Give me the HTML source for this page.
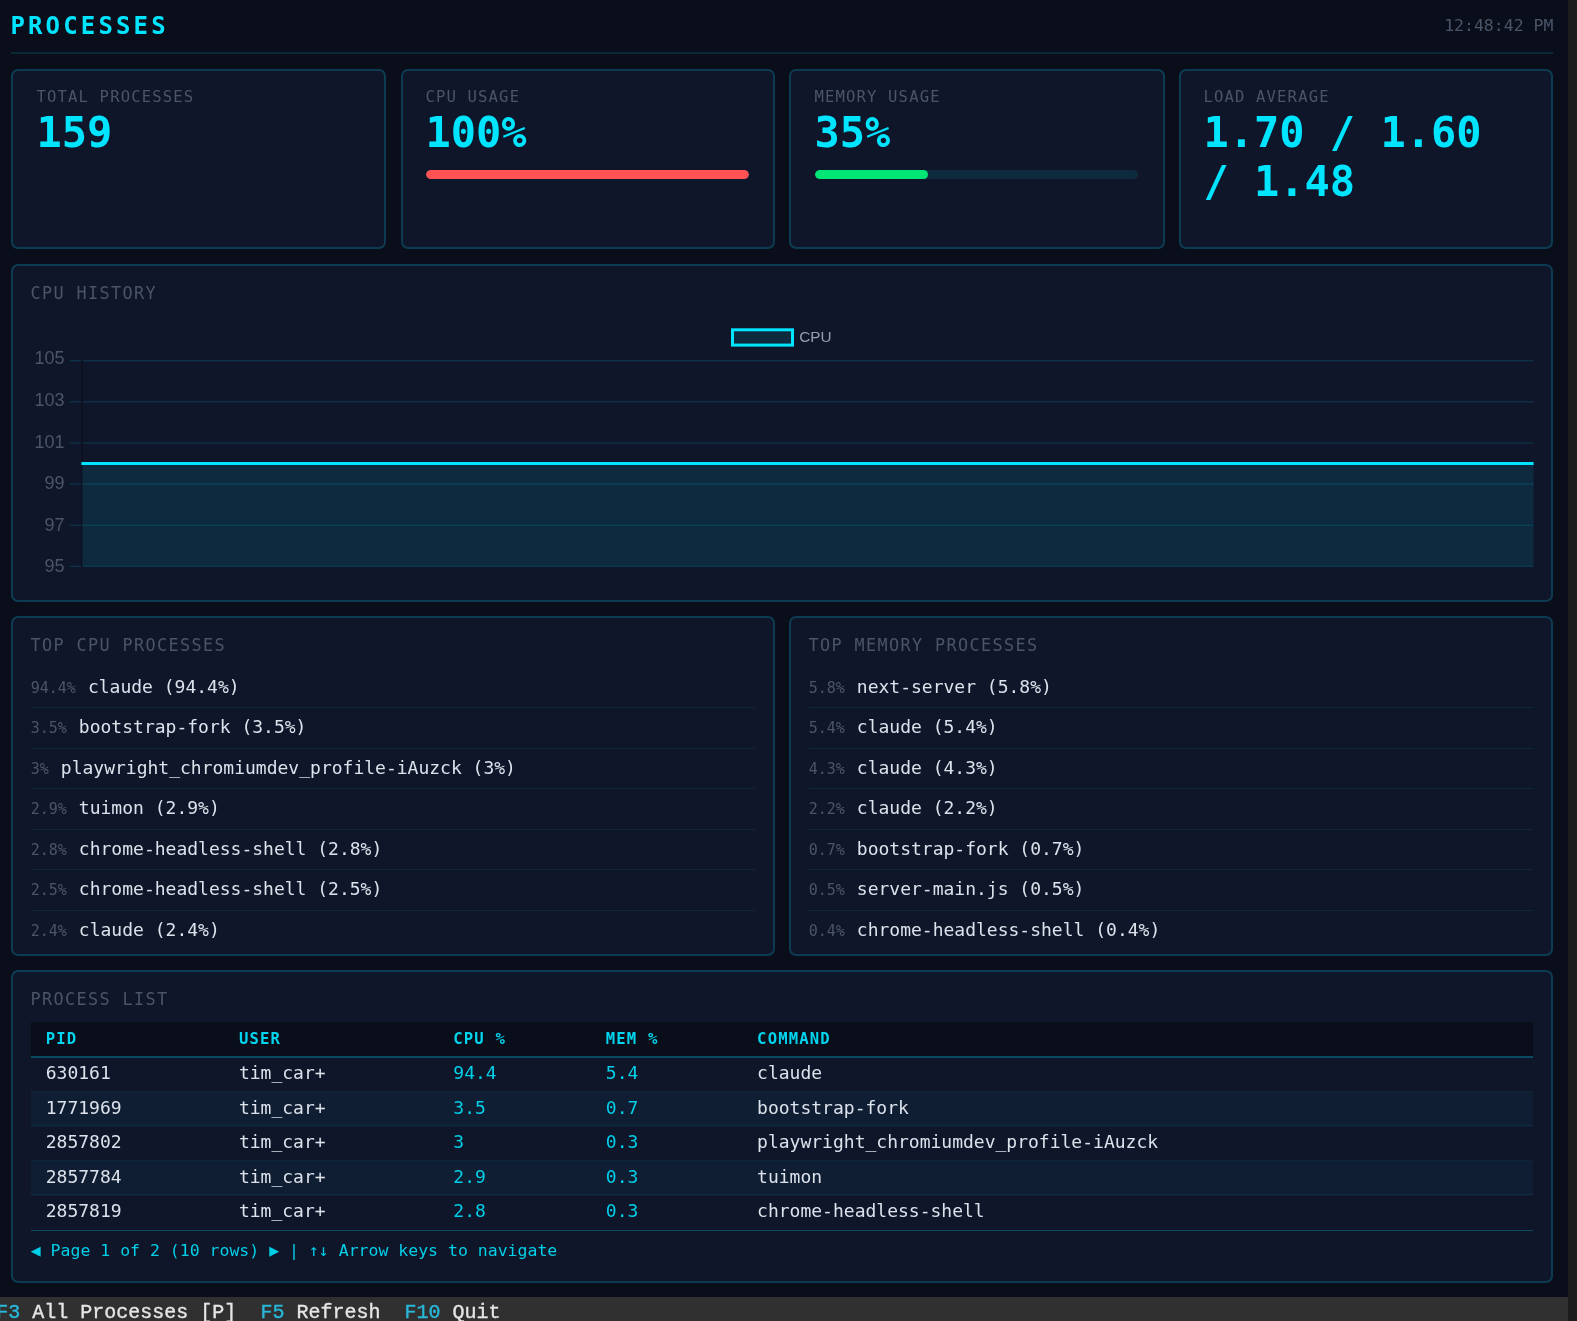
<!DOCTYPE html>
<html lang="en"><head><meta charset="utf-8"><title>Processes</title>
<style>
*{box-sizing:border-box;margin:0;padding:0}
html,body{width:1577px;height:1321px;overflow:hidden;background:#0a0e1a}
body{position:relative;font-family:"DejaVu Sans Mono","Liberation Mono",monospace}
#app{position:absolute;left:0;top:0;width:1577px;height:1321px;will-change:transform}
#app *{position:absolute}
#app .bar>div,#app .k{position:static}
ul{list-style:none}
i{display:block;font-style:normal}
.t{white-space:pre;line-height:normal;font-weight:400;font-family:"DejaVu Sans Mono","Liberation Mono",monospace}
h1.t,h2.t{font-weight:inherit}
.card{background:#10162a;border:2px solid rgba(0,229,255,0.19);border-radius:7px}
.keys{font-family:"Liberation Mono","DejaVu Sans Mono",monospace;font-size:20px;color:#e6e6e6;-webkit-text-stroke:0.35px #e6e6e6}
.k{color:#29b8db;-webkit-text-stroke-color:#29b8db}
</style></head>
<body>
<main id="app">
<header class="hdr" style="left:0.00px;top:0.00px;width:1568.00px;height:56.00px;">
<h1 class="t" style="top:12.00px;font-size:24px;color:#00e5ff;left:10.40px;font-weight:700;letter-spacing:3.15px;">PROCESSES</h1>
<time class="t" style="top:16.00px;font-size:16.5px;color:#4a5568;right:14.60px;">12:48:42 PM</time>
<div class="rule" style="left:11.00px;top:52.00px;width:1542.00px;height:2.00px;background:rgba(0,229,255,0.13);"></div>
</header>
<section class="card stat" aria-label="Total Processes" style="left:11.00px;top:69.00px;width:375.00px;height:180.00px;">
<div class="t lbl" style="top:17.00px;font-size:15.6px;color:#4a5568;left:23.45px;letter-spacing:1.14px;">TOTAL PROCESSES</div>
<div class="t val" style="top:36.60px;font-size:42px;color:#00e5ff;left:23.45px;font-weight:700;">159</div>
</section>
<section class="card stat" aria-label="Cpu Usage" style="left:401.00px;top:69.00px;width:374.00px;height:180.00px;">
<div class="t lbl" style="top:17.00px;font-size:15.6px;color:#4a5568;left:22.42px;letter-spacing:1.14px;">CPU USAGE</div>
<div class="t val" style="top:36.60px;font-size:42px;color:#00e5ff;left:22.42px;font-weight:700;">100%</div>
<div class="bar" style="left:22.72px;top:98.50px;width:323.57px;height:9.00px;background:rgba(0,229,255,0.1);border-radius:4.5px;overflow:hidden;"><div style="width:100%;height:100%;background:#ff5252;border-radius:4.5px"></div></div>
</section>
<section class="card stat" aria-label="Memory Usage" style="left:789.00px;top:69.00px;width:376.00px;height:180.00px;">
<div class="t lbl" style="top:17.00px;font-size:15.6px;color:#4a5568;left:23.40px;letter-spacing:1.14px;">MEMORY USAGE</div>
<div class="t val" style="top:36.60px;font-size:42px;color:#00e5ff;left:23.40px;font-weight:700;">35%</div>
<div class="bar" style="left:23.70px;top:98.50px;width:323.57px;height:9.00px;background:rgba(0,229,255,0.1);border-radius:4.5px;overflow:hidden;"><div style="width:35%;height:100%;background:#00e676;border-radius:4.5px"></div></div>
</section>
<section class="card stat" aria-label="Load Average" style="left:1179.00px;top:69.00px;width:374.00px;height:180.00px;">
<div class="t lbl" style="top:17.00px;font-size:15.6px;color:#4a5568;left:22.38px;letter-spacing:1.14px;">LOAD AVERAGE</div>
<div class="t val" style="top:36.60px;font-size:42px;color:#00e5ff;left:22.38px;font-weight:700;">1.70 / 1.60</div>
<div class="t val" style="top:86.00px;font-size:42px;color:#00e5ff;left:22.38px;font-weight:700;">/ 1.48</div>
</section>
<section class="card" aria-label="CPU History" style="left:11.00px;top:264.00px;width:1542.00px;height:338.00px;">
<h2 class="t" style="top:16.50px;font-size:16.8px;color:#4a5568;left:17.50px;letter-spacing:1.4px;">CPU HISTORY</h2>
<svg class="chart" style="left:-13px;top:-266px" width="1568" height="620" viewBox="0 0 1568 620" role="img" aria-label="CPU history chart"><rect x="81.9" y="463.5" width="1451.7" height="102.85" fill="rgba(0,229,255,0.1)"/><rect x="69.5" y="360.00" width="11.7" height="1.3" fill="rgba(0,229,255,0.14)"/><rect x="83" y="360.00" width="1450.6" height="1.3" fill="rgba(0,229,255,0.14)"/><rect x="69.5" y="401.15" width="11.7" height="1.3" fill="rgba(0,229,255,0.14)"/><rect x="83" y="401.15" width="1450.6" height="1.3" fill="rgba(0,229,255,0.14)"/><rect x="69.5" y="442.30" width="11.7" height="1.3" fill="rgba(0,229,255,0.14)"/><rect x="83" y="442.30" width="1450.6" height="1.3" fill="rgba(0,229,255,0.14)"/><rect x="69.5" y="483.45" width="11.7" height="1.3" fill="rgba(0,229,255,0.14)"/><rect x="83" y="483.45" width="1450.6" height="1.3" fill="rgba(0,229,255,0.14)"/><rect x="69.5" y="524.60" width="11.7" height="1.3" fill="rgba(0,229,255,0.14)"/><rect x="83" y="524.60" width="1450.6" height="1.3" fill="rgba(0,229,255,0.14)"/><rect x="69.5" y="565.75" width="11.7" height="1.3" fill="rgba(0,229,255,0.14)"/><rect x="83" y="565.75" width="1450.6" height="1.3" fill="rgba(0,229,255,0.14)"/><rect x="81.3" y="360.00" width="1.5" height="206.95" fill="rgba(0,0,0,0.25)"/><rect x="81.4" y="462" width="1452.2" height="3" fill="#00e5ff"/><text x="64.6" y="364.40" text-anchor="end" font-family='"Liberation Sans","DejaVu Sans",sans-serif' font-size="18" fill="#4a5568">105</text><text x="64.6" y="406.20" text-anchor="end" font-family='"Liberation Sans","DejaVu Sans",sans-serif' font-size="18" fill="#4a5568">103</text><text x="64.6" y="447.50" text-anchor="end" font-family='"Liberation Sans","DejaVu Sans",sans-serif' font-size="18" fill="#4a5568">101</text><text x="64.6" y="489.00" text-anchor="end" font-family='"Liberation Sans","DejaVu Sans",sans-serif' font-size="18" fill="#4a5568">99</text><text x="64.6" y="531.00" text-anchor="end" font-family='"Liberation Sans","DejaVu Sans",sans-serif' font-size="18" fill="#4a5568">97</text><text x="64.6" y="571.60" text-anchor="end" font-family='"Liberation Sans","DejaVu Sans",sans-serif' font-size="18" fill="#4a5568">95</text><rect x="732.5" y="329.8" width="60" height="15.3" fill="rgba(0,229,255,0.1)" stroke="#00e5ff" stroke-width="3"/><text x="799.3" y="342" font-family='"Liberation Sans","DejaVu Sans",sans-serif' font-size="15.3" fill="#949eb0">CPU</text></svg>
</section>
<section class="card" aria-label="Top Cpu Processes" style="left:11.00px;top:616.00px;width:764.00px;height:340.00px;">
<h2 class="t" style="top:17.10px;font-size:16.8px;color:#4a5568;left:17.50px;letter-spacing:1.4px;">TOP CPU PROCESSES</h2>
<ul class="list" style="left:17.75px;top:49.00px;width:724.55px;height:284.00px;">
<li style="left:0.00px;top:0.00px;width:724.55px;height:40.50px;">
<span class="t pct" style="top:11.60px;font-size:15px;color:#4a5568;left:0.00px;">94.4%</span>
<span class="t name" style="top:8.60px;font-size:18px;color:#dce2eb;left:57.15px;">claude (94.4%)</span>
<i class="sep" style="left:0.00px;top:40.00px;width:724.55px;height:1.30px;background:rgba(0,229,255,0.09);"></i>
</li>
<li style="left:0.00px;top:40.50px;width:724.55px;height:40.50px;">
<span class="t pct" style="top:11.60px;font-size:15px;color:#4a5568;left:0.00px;">3.5%</span>
<span class="t name" style="top:8.60px;font-size:18px;color:#dce2eb;left:48.12px;">bootstrap-fork (3.5%)</span>
<i class="sep" style="left:0.00px;top:40.00px;width:724.55px;height:1.30px;background:rgba(0,229,255,0.09);"></i>
</li>
<li style="left:0.00px;top:81.00px;width:724.55px;height:40.50px;">
<span class="t pct" style="top:11.60px;font-size:15px;color:#4a5568;left:0.00px;">3%</span>
<span class="t name" style="top:8.60px;font-size:18px;color:#dce2eb;left:30.06px;">playwright_chromiumdev_profile-iAuzck (3%)</span>
<i class="sep" style="left:0.00px;top:40.00px;width:724.55px;height:1.30px;background:rgba(0,229,255,0.09);"></i>
</li>
<li style="left:0.00px;top:121.50px;width:724.55px;height:40.50px;">
<span class="t pct" style="top:11.60px;font-size:15px;color:#4a5568;left:0.00px;">2.9%</span>
<span class="t name" style="top:8.60px;font-size:18px;color:#dce2eb;left:48.12px;">tuimon (2.9%)</span>
<i class="sep" style="left:0.00px;top:40.00px;width:724.55px;height:1.30px;background:rgba(0,229,255,0.09);"></i>
</li>
<li style="left:0.00px;top:162.00px;width:724.55px;height:40.50px;">
<span class="t pct" style="top:11.60px;font-size:15px;color:#4a5568;left:0.00px;">2.8%</span>
<span class="t name" style="top:8.60px;font-size:18px;color:#dce2eb;left:48.12px;">chrome-headless-shell (2.8%)</span>
<i class="sep" style="left:0.00px;top:40.00px;width:724.55px;height:1.30px;background:rgba(0,229,255,0.09);"></i>
</li>
<li style="left:0.00px;top:202.50px;width:724.55px;height:40.50px;">
<span class="t pct" style="top:11.60px;font-size:15px;color:#4a5568;left:0.00px;">2.5%</span>
<span class="t name" style="top:8.60px;font-size:18px;color:#dce2eb;left:48.12px;">chrome-headless-shell (2.5%)</span>
<i class="sep" style="left:0.00px;top:40.00px;width:724.55px;height:1.30px;background:rgba(0,229,255,0.09);"></i>
</li>
<li style="left:0.00px;top:243.00px;width:724.55px;height:40.50px;">
<span class="t pct" style="top:11.60px;font-size:15px;color:#4a5568;left:0.00px;">2.4%</span>
<span class="t name" style="top:8.60px;font-size:18px;color:#dce2eb;left:48.12px;">claude (2.4%)</span>
</li>
</ul>
</section>
<section class="card" aria-label="Top Memory Processes" style="left:789.00px;top:616.00px;width:764.00px;height:340.00px;">
<h2 class="t" style="top:17.10px;font-size:16.8px;color:#4a5568;left:17.45px;letter-spacing:1.4px;">TOP MEMORY PROCESSES</h2>
<ul class="list" style="left:17.70px;top:49.00px;width:724.55px;height:284.00px;">
<li style="left:0.00px;top:0.00px;width:724.55px;height:40.50px;">
<span class="t pct" style="top:11.60px;font-size:15px;color:#4a5568;left:0.00px;">5.8%</span>
<span class="t name" style="top:8.60px;font-size:18px;color:#dce2eb;left:48.12px;">next-server (5.8%)</span>
<i class="sep" style="left:0.00px;top:40.00px;width:724.55px;height:1.30px;background:rgba(0,229,255,0.09);"></i>
</li>
<li style="left:0.00px;top:40.50px;width:724.55px;height:40.50px;">
<span class="t pct" style="top:11.60px;font-size:15px;color:#4a5568;left:0.00px;">5.4%</span>
<span class="t name" style="top:8.60px;font-size:18px;color:#dce2eb;left:48.12px;">claude (5.4%)</span>
<i class="sep" style="left:0.00px;top:40.00px;width:724.55px;height:1.30px;background:rgba(0,229,255,0.09);"></i>
</li>
<li style="left:0.00px;top:81.00px;width:724.55px;height:40.50px;">
<span class="t pct" style="top:11.60px;font-size:15px;color:#4a5568;left:0.00px;">4.3%</span>
<span class="t name" style="top:8.60px;font-size:18px;color:#dce2eb;left:48.12px;">claude (4.3%)</span>
<i class="sep" style="left:0.00px;top:40.00px;width:724.55px;height:1.30px;background:rgba(0,229,255,0.09);"></i>
</li>
<li style="left:0.00px;top:121.50px;width:724.55px;height:40.50px;">
<span class="t pct" style="top:11.60px;font-size:15px;color:#4a5568;left:0.00px;">2.2%</span>
<span class="t name" style="top:8.60px;font-size:18px;color:#dce2eb;left:48.12px;">claude (2.2%)</span>
<i class="sep" style="left:0.00px;top:40.00px;width:724.55px;height:1.30px;background:rgba(0,229,255,0.09);"></i>
</li>
<li style="left:0.00px;top:162.00px;width:724.55px;height:40.50px;">
<span class="t pct" style="top:11.60px;font-size:15px;color:#4a5568;left:0.00px;">0.7%</span>
<span class="t name" style="top:8.60px;font-size:18px;color:#dce2eb;left:48.12px;">bootstrap-fork (0.7%)</span>
<i class="sep" style="left:0.00px;top:40.00px;width:724.55px;height:1.30px;background:rgba(0,229,255,0.09);"></i>
</li>
<li style="left:0.00px;top:202.50px;width:724.55px;height:40.50px;">
<span class="t pct" style="top:11.60px;font-size:15px;color:#4a5568;left:0.00px;">0.5%</span>
<span class="t name" style="top:8.60px;font-size:18px;color:#dce2eb;left:48.12px;">server-main.js (0.5%)</span>
<i class="sep" style="left:0.00px;top:40.00px;width:724.55px;height:1.30px;background:rgba(0,229,255,0.09);"></i>
</li>
<li style="left:0.00px;top:243.00px;width:724.55px;height:40.50px;">
<span class="t pct" style="top:11.60px;font-size:15px;color:#4a5568;left:0.00px;">0.4%</span>
<span class="t name" style="top:8.60px;font-size:18px;color:#dce2eb;left:48.12px;">chrome-headless-shell (0.4%)</span>
</li>
</ul>
</section>
<section class="card" aria-label="Process List" style="left:11.00px;top:970.00px;width:1542.00px;height:313.00px;">
<h2 class="t" style="top:16.90px;font-size:16.8px;color:#4a5568;left:17.50px;letter-spacing:1.4px;">PROCESS LIST</h2>
<div class="table" role="table" style="left:17.75px;top:49.50px;width:1502.50px;height:210.00px;">
<div class="tr" role="row" style="left:0.00px;top:0.00px;width:1502.50px;height:36.00px;">
<i style="left:0.00px;top:0.00px;width:1502.50px;height:34.50px;background:#0a0e1a;"></i>
<i style="left:0.00px;top:34.50px;width:1502.50px;height:1.60px;background:rgba(0,229,255,0.26);"></i>
<span class="t th" style="top:8.50px;font-size:15.6px;color:#00d4ee;left:15.00px;font-weight:700;letter-spacing:1.15px;">PID</span>
<span class="t th" style="top:8.50px;font-size:15.6px;color:#00d4ee;left:208.15px;font-weight:700;letter-spacing:1.15px;">USER</span>
<span class="t th" style="top:8.50px;font-size:15.6px;color:#00d4ee;left:422.55px;font-weight:700;letter-spacing:1.15px;">CPU %</span>
<span class="t th" style="top:8.50px;font-size:15.6px;color:#00d4ee;left:575.05px;font-weight:700;letter-spacing:1.15px;">MEM %</span>
<span class="t th" style="top:8.50px;font-size:15.6px;color:#00d4ee;left:726.35px;font-weight:700;letter-spacing:1.15px;">COMMAND</span>
</div>
<div class="tr" role="row" style="left:0.00px;top:36.00px;width:1502.50px;height:34.50px;">
<i style="left:0.00px;top:33.00px;width:1502.50px;height:1.30px;background:rgba(0,229,255,0.07);"></i>
<span class="t td" style="top:4.90px;font-size:18px;color:#dce2eb;left:15.00px;">630161</span>
<span class="t td" style="top:4.90px;font-size:18px;color:#dce2eb;left:208.15px;">tim_car+</span>
<span class="t td" style="top:4.90px;font-size:18px;color:#00cfe8;left:422.55px;">94.4</span>
<span class="t td" style="top:4.90px;font-size:18px;color:#00cfe8;left:575.05px;">5.4</span>
<span class="t td" style="top:4.90px;font-size:18px;color:#dce2eb;left:726.35px;">claude</span>
</div>
<div class="tr" role="row" style="left:0.00px;top:70.50px;width:1502.50px;height:34.50px;">
<i style="left:0.00px;top:0.00px;width:1502.50px;height:34.50px;background:rgba(0,229,255,0.04);"></i>
<i style="left:0.00px;top:33.00px;width:1502.50px;height:1.30px;background:rgba(0,229,255,0.07);"></i>
<span class="t td" style="top:4.90px;font-size:18px;color:#dce2eb;left:15.00px;">1771969</span>
<span class="t td" style="top:4.90px;font-size:18px;color:#dce2eb;left:208.15px;">tim_car+</span>
<span class="t td" style="top:4.90px;font-size:18px;color:#00cfe8;left:422.55px;">3.5</span>
<span class="t td" style="top:4.90px;font-size:18px;color:#00cfe8;left:575.05px;">0.7</span>
<span class="t td" style="top:4.90px;font-size:18px;color:#dce2eb;left:726.35px;">bootstrap-fork</span>
</div>
<div class="tr" role="row" style="left:0.00px;top:105.00px;width:1502.50px;height:34.50px;">
<i style="left:0.00px;top:33.00px;width:1502.50px;height:1.30px;background:rgba(0,229,255,0.07);"></i>
<span class="t td" style="top:4.90px;font-size:18px;color:#dce2eb;left:15.00px;">2857802</span>
<span class="t td" style="top:4.90px;font-size:18px;color:#dce2eb;left:208.15px;">tim_car+</span>
<span class="t td" style="top:4.90px;font-size:18px;color:#00cfe8;left:422.55px;">3</span>
<span class="t td" style="top:4.90px;font-size:18px;color:#00cfe8;left:575.05px;">0.3</span>
<span class="t td" style="top:4.90px;font-size:18px;color:#dce2eb;left:726.35px;">playwright_chromiumdev_profile-iAuzck</span>
</div>
<div class="tr" role="row" style="left:0.00px;top:139.50px;width:1502.50px;height:34.50px;">
<i style="left:0.00px;top:0.00px;width:1502.50px;height:34.50px;background:rgba(0,229,255,0.04);"></i>
<i style="left:0.00px;top:33.00px;width:1502.50px;height:1.30px;background:rgba(0,229,255,0.07);"></i>
<span class="t td" style="top:4.90px;font-size:18px;color:#dce2eb;left:15.00px;">2857784</span>
<span class="t td" style="top:4.90px;font-size:18px;color:#dce2eb;left:208.15px;">tim_car+</span>
<span class="t td" style="top:4.90px;font-size:18px;color:#00cfe8;left:422.55px;">2.9</span>
<span class="t td" style="top:4.90px;font-size:18px;color:#00cfe8;left:575.05px;">0.3</span>
<span class="t td" style="top:4.90px;font-size:18px;color:#dce2eb;left:726.35px;">tuimon</span>
</div>
<div class="tr" role="row" style="left:0.00px;top:174.00px;width:1502.50px;height:34.50px;">
<span class="t td" style="top:4.90px;font-size:18px;color:#dce2eb;left:15.00px;">2857819</span>
<span class="t td" style="top:4.90px;font-size:18px;color:#dce2eb;left:208.15px;">tim_car+</span>
<span class="t td" style="top:4.90px;font-size:18px;color:#00cfe8;left:422.55px;">2.8</span>
<span class="t td" style="top:4.90px;font-size:18px;color:#00cfe8;left:575.05px;">0.3</span>
<span class="t td" style="top:4.90px;font-size:18px;color:#dce2eb;left:726.35px;">chrome-headless-shell</span>
</div>
</div>
<i style="left:17.75px;top:257.80px;width:1502.50px;height:1.60px;background:rgba(0,229,255,0.26);"></i>
<p class="t pager" style="top:268.50px;font-size:16.5px;color:#00cfe8;left:17.75px;">◀ Page 1 of 2 (10 rows) ▶ | ↑↓ Arrow keys to navigate</p>
</section>
<footer style="left:0;top:1297px;width:1568px;height:24px;background:#303030;overflow:hidden"><div class="t keys" style="left:-3.7px;top:4px"><span class="k">F3</span> All Processes [P]  <span class="k">F5</span> Refresh  <span class="k">F10</span> Quit</div></footer>
<div class="strip" style="left:1568px;top:0;width:9px;height:1321px;background:#1c1c1c"></div>
</main>
</body></html>
